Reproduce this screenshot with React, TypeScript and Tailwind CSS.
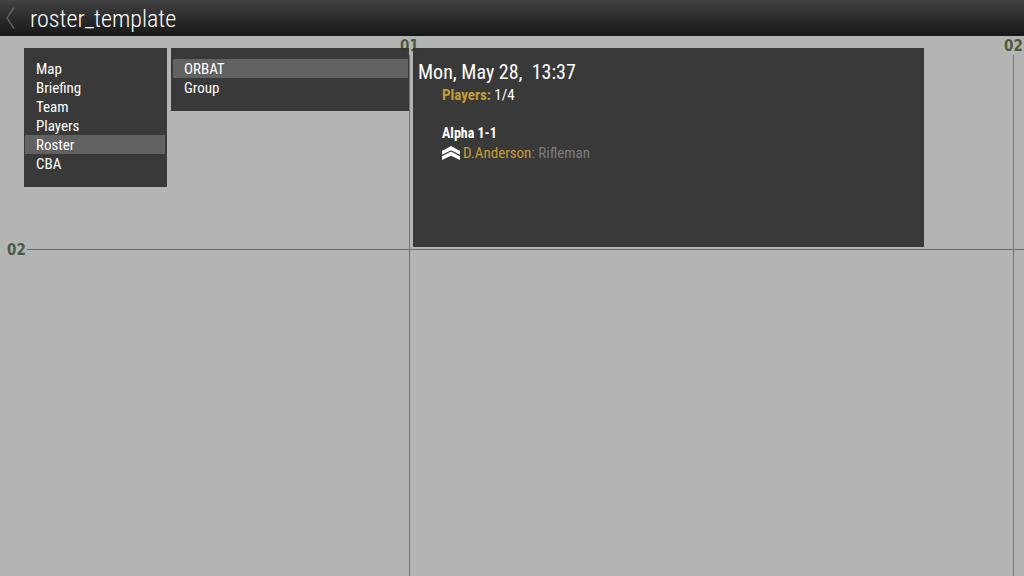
const diaryTabs = ["Map", "Briefing", "Team", "Players", "Roster", "CBA"];
const rosterPages = ["ORBAT", "Group"];

function MenuList({ label, items, active }: { label: string; items: string[]; active: string }) {
  return (
    <nav aria-label={label} className="flex flex-col">
      {items.map((item) => (
        <button
          key={item}
          type="button"
          aria-current={item === active ? "page" : undefined}
          className={`h-[19px] px-[11px] text-left text-[15px] leading-5 ${item === active ? "bg-[#626262]" : ""}`}
        >
          {item}
        </button>
      ))}
    </nav>
  );
}

function MapGrid() {
  return (
    <div aria-hidden="true" className="pointer-events-none absolute inset-0 overflow-hidden">
      <div className="absolute top-[213px] right-0 left-[27px] h-px bg-[#696b67]" />
      <div className="absolute top-[19px] bottom-0 left-[409px] w-px bg-[#73766b]" />
      <div className="absolute top-[19px] bottom-0 left-[1013px] w-px bg-[#73766b]" />
    </div>
  );
}

function MapLabels() {
  const label = "absolute font-['DejaVu_Sans_Condensed','DejaVu_Sans',sans-serif] text-[15px] leading-[18px] font-bold text-[#2c3a1c]/75";
  return (
    <div className="pointer-events-none absolute inset-0">
      <span className={`${label} top-px left-[400px]`}>01</span>
      <span className={`${label} top-px left-[1004px]`}>02</span>
      <span className={`${label} top-[205px] left-[7px]`}>02</span>
    </div>
  );
}

export default function App() {
  return (
    <div className="flex min-h-screen flex-col bg-[#b2b5b1] font-['Roboto_Condensed','Liberation_Sans_Narrow',Roboto,sans-serif] text-white">
      <header className="flex h-9 items-center bg-linear-to-b from-[#414141] to-[#181818]">
        <button type="button" aria-label="Back" className="flex w-[30px] pl-[6px]">
          <svg width="9" height="22" viewBox="0 0 9 22" fill="none" stroke="#606060" strokeWidth="1.5">
            <path d="M8 .5 1 11l7 10.5" />
          </svg>
        </button>
        <h1 className="pt-px text-2xl leading-9 font-light">roster_template</h1>
      </header>
      <main className="relative flex-1">
        <MapGrid />
        <div className="relative flex items-start gap-1 pt-3 pr-[100px] pl-6">
          <section className="w-[143px] shrink-0 bg-[#393939] pt-[11px] pr-[2px] pb-[14px] pl-[1px]">
            <MenuList label="Diary" items={diaryTabs} active="Roster" />
          </section>
          <section className="w-[238px] shrink-0 bg-[#393939] pt-[11px] pr-[1px] pb-[14px] pl-[2px]">
            <MenuList label="Roster pages" items={rosterPages} active="ORBAT" />
          </section>
          <article className="min-h-[199px] min-w-0 flex-1 bg-[#393939] pt-3 pl-[5px]">
            <h2 className="text-xl leading-6 whitespace-pre">Mon, May 28,  13:37</h2>
            <div className="pt-px pl-6 text-[15px] leading-5">
              <p>
                <b className="text-[#c69c35]">Players:</b> 1/4
              </p>
              <h3 className="mt-[18px] text-sm leading-5 font-bold">Alpha 1-1</h3>
              <p className="flex items-center">
                <svg width="18" height="14" viewBox="0 0 19 14" preserveAspectRatio="none" fill="#fff" className="mr-[3px]" role="img" aria-label="Sergeant">
                  <path d="M9.5 0 19 5v3.800L9.500 4.200 0 8.800V5Z" />
                  <path d="M9.500 5.600 19 10.300v3.700L9.500 9.700 0 14v-3.700Z" />
                </svg>
                <span className="text-[#c69c35]">D.Anderson</span>
                <span className="text-[#7c7c7c]">: Rifleman</span>
              </p>
            </div>
          </article>
        </div>
        <MapLabels />
      </main>
    </div>
  );
}
